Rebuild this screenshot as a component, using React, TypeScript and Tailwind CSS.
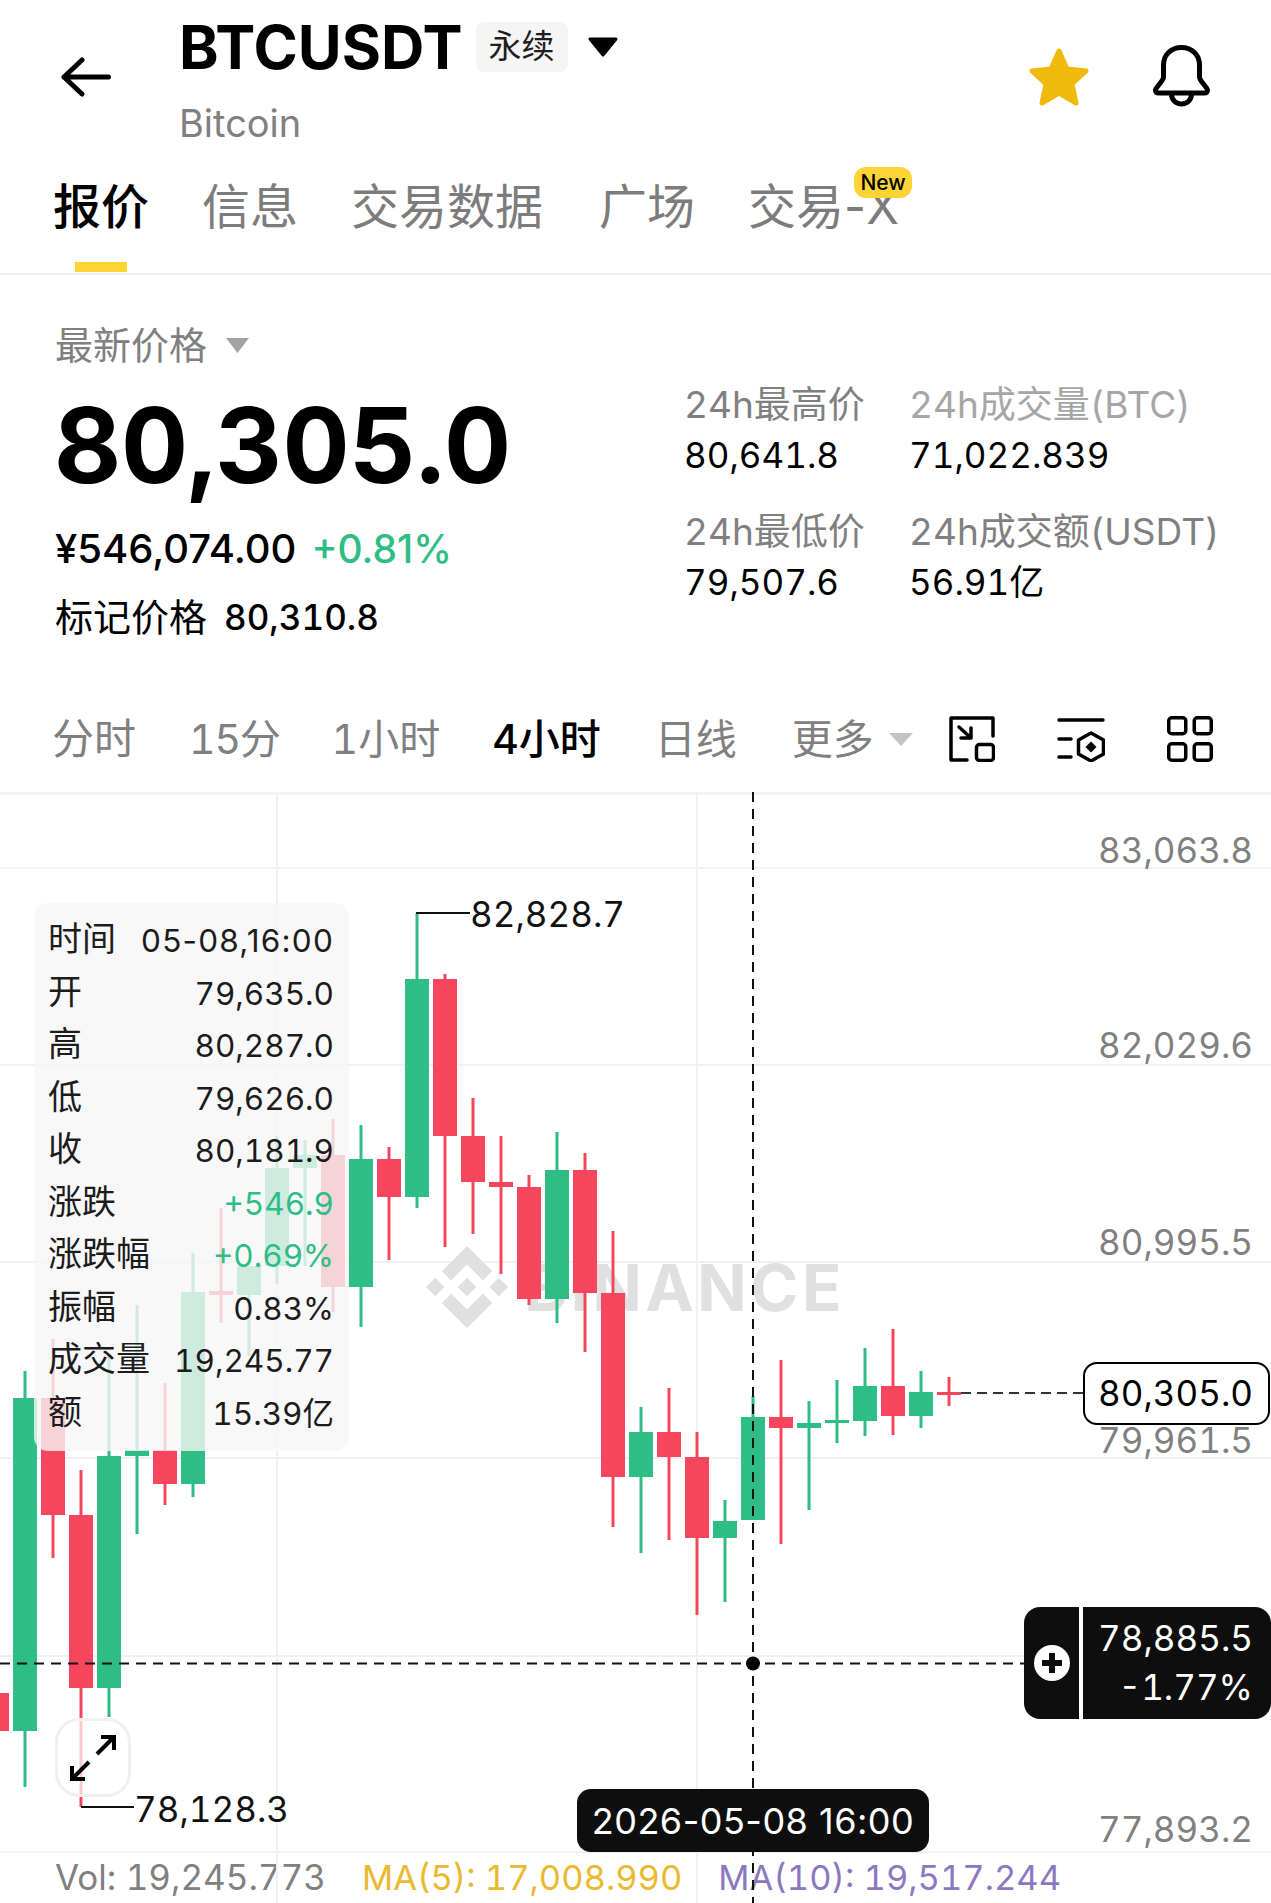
import React from "react";

type Candle = [x: number, top: number, bottom: number, high: number, low: number, up: boolean];

// page coordinates, the svg viewBox below starts at y=792
const candles: Candle[] = [
  [-3, 1693, 1731, 1693, 1731, false],
  [25, 1398, 1731, 1371, 1787, true],
  [53, 1398, 1515, 1339, 1558, false],
  [81, 1515, 1688, 1470, 1807, false],
  [109, 1456, 1688, 1354, 1717, true],
  [137, 1450, 1456, 1305, 1534, true],
  [165, 1450, 1484, 1383, 1505, false],
  [193, 1292, 1484, 1253, 1497, true],
  [221, 1291, 1295, 1208, 1323, false],
  [249, 1266, 1295, 1266, 1356, true],
  [277, 1168, 1266, 1136, 1284, true],
  [305, 1155, 1168, 1140, 1266, true],
  [333, 1155, 1287, 1119, 1312, false],
  [361, 1159, 1287, 1125, 1327, true],
  [389, 1159, 1197, 1147, 1260, false],
  [417, 979, 1197, 913, 1208, true],
  [445, 979, 1136, 974, 1247, false],
  [473, 1136, 1182, 1098, 1234, false],
  [501, 1182, 1187, 1136, 1274, false],
  [529, 1187, 1299, 1175, 1305, false],
  [557, 1170, 1299, 1132, 1323, true],
  [585, 1170, 1293, 1153, 1352, false],
  [613, 1293, 1477, 1231, 1527, false],
  [641, 1432, 1477, 1407, 1553, true],
  [669, 1432, 1457, 1388, 1540, false],
  [697, 1457, 1538, 1432, 1615, false],
  [725, 1521, 1538, 1500, 1602, true],
  [753, 1417, 1520, 1396, 1520, true],
  [781, 1417, 1428, 1360, 1544, false],
  [809, 1423, 1428, 1401, 1510, true],
  [837, 1420, 1423, 1380, 1443, true],
  [865, 1386, 1421, 1348, 1436, true],
  [893, 1386, 1416, 1329, 1435, false],
  [921, 1392, 1416, 1371, 1428, true],
  [949, 1392, 1395, 1377, 1406, false],
];

const axisLabels = [
  { text: "83,063.8", cls: "top-[36px]" },
  { text: "82,029.6", cls: "top-[231px]" },
  { text: "80,995.5", cls: "top-[428px]" },
  { text: "79,961.5", cls: "top-[626px]" },
  { text: "77,893.2", cls: "top-[1015px]" },
];

const tooltipRows = [
  { label: "时间", value: "05-08,16:00", cls: "proportional-nums tracking-[1.200px] text-[#1c1c1c]" },
  { label: "开", value: "79,635.0", cls: "text-[#1c1c1c]" },
  { label: "高", value: "80,287.0", cls: "text-[#1c1c1c]" },
  { label: "低", value: "79,626.0", cls: "text-[#1c1c1c]" },
  { label: "收", value: "80,181.9", cls: "text-[#1c1c1c]" },
  { label: "涨跌", value: "+546.9", cls: "text-[#2EBD85]" },
  { label: "涨跌幅", value: "+0.69%", cls: "text-[#2EBD85]" },
  { label: "振幅", value: "0.83%", cls: "text-[#1c1c1c]" },
  { label: "成交量", value: "19,245.77", cls: "text-[#1c1c1c]" },
  { label: "额", value: "15.39亿", cls: "text-[#1c1c1c]" },
];

function Header() {
  return (
    <div className="flex h-[160px]">
      <svg className="ml-[61px] mt-[57px] h-[40px] w-[50px]" viewBox="0 0 50 40" fill="none" stroke="#000" strokeWidth="5" strokeLinecap="round" strokeLinejoin="round">
        <path d="M47.5 20H3M21 3 3 20l18 17" />
      </svg>
      <div className="ml-[68px] pt-[22px]">
        <div className="flex h-[50px] items-center">
          <span className="text-[60px] font-bold leading-[50px] text-black">BTCUSDT</span>
          <span className="ml-[13px] flex h-[50px] w-[92px] items-center justify-center rounded-[8px] bg-[#f5f5f5] text-[33px] text-[#1e1e1e]">永续</span>
          <svg className="ml-[19px] h-[22px] w-[32px]" viewBox="0 0 32 22" fill="#000" stroke="#000" strokeWidth="3" strokeLinejoin="round">
            <path d="M3 3h26L16 19z" />
          </svg>
        </div>
        <div className="mt-[29px] text-[38px] leading-[44px] text-[#808080]">Bitcoin</div>
      </div>
      <div className="ml-auto mr-[59px] mt-[44px] flex items-start gap-[61px]">
        <svg className="mt-[3px] h-[60px] w-[62px]" viewBox="0 0 62 60" fill="#F0B90B" stroke="#F0B90B" strokeWidth="5" strokeLinejoin="round">
          <path d="M31 4l8 18 19 2-14 13 4 19-17-10-17 10 4-19L4 24l19-2z" />
        </svg>
        <svg className="h-[64px] w-[61px]" viewBox="0 0 61 64" fill="none" stroke="#000" strokeWidth="5" strokeLinejoin="round">
          <path d="M30.5 3.5C20 3.5 12.5 11 12.5 21v12c0 4-7.500 10-8 13 0 2 1.500 3 3.500 3h45c2 0 3.500-1 3.500-3-.5-3-8-9-8-13V21c0-10-7.500-17.500-18-17.500z" />
          <path d="M20.500 50c0 6 4.500 10 10 10s10-4 10-10" />
        </svg>
      </div>
    </div>
  );
}

function Tabs() {
  return (
    <div className="flex h-[113px] gap-[53px] pl-[53px] pt-[19px] text-[48px] leading-[56px] text-[#7c7c7c]">
      <div className="flex flex-col items-center">
        <span className="font-medium text-black">报价</span>
        <span className="mt-[27px] h-[10px] w-[52px] bg-[#FCD535]" />
      </div>
      <span>信息</span>
      <span>交易数据</span>
      <span className="ml-[3px]">广场</span>
      <span className="relative proportional-nums">
        交易-X
        <span className="absolute left-[106px] top-[-12px] flex h-[31px] w-[58px] items-center justify-center rounded-[12px] bg-[#FCD535] text-[21px] font-medium leading-none text-black">New</span>
      </span>
    </div>
  );
}

function Stats() {
  return (
    <div className="flex h-[411px]">
      <div className="w-[630px] pl-[55px] pt-[46px]">
        <div className="flex h-[48px] items-center text-[38px] leading-[48px] text-[#808080]">
          最新价格
          <svg className="ml-[18px] h-[17px] w-[25px]" viewBox="0 0 25 17" fill="#a3a3a3">
            <path d="M1 1h23L12.500 16z" />
          </svg>
        </div>
        <div className="-ml-[1px] mt-[24px] text-[104px] font-bold leading-[104px] tracking-[-0.3px] text-black">80,305.0</div>
        <div className="mt-[27px] flex h-[50px] items-center leading-[50px] proportional-nums">
          <span className="text-[40px] font-medium text-black">¥546,074.00</span>
          <span className="ml-[15px] text-[39px] font-medium text-[#2EBD85]">+0.81%</span>
        </div>
        <div className="mt-[18px] flex h-[50px] items-center leading-[50px] text-black">
          <span className="text-[38px]">标记价格</span>
          <span className="ml-[17px] text-[35px] font-medium">80,310.8</span>
        </div>
      </div>
      <div className="grid grid-cols-[225px_auto] content-start pl-[54px] pt-[108px] text-[35px] leading-[44px]">
        <div>
          <div className="text-[37px] text-[#808080]">24h最高价</div>
          <div className="mt-[6px] text-black">80,641.8</div>
        </div>
        <div>
          <div className="text-[37px] text-[#a6a6a6]">24h成交量(BTC)</div>
          <div className="mt-[6px] text-black">71,022.839</div>
        </div>
        <div className="mt-[33px]">
          <div className="text-[37px] text-[#808080]">24h最低价</div>
          <div className="mt-[6px] text-black">79,507.6</div>
        </div>
        <div className="mt-[33px]">
          <div className="text-[37px] text-[#808080]">24h成交额(USDT)</div>
          <div className="mt-[6px] text-black">56.91亿</div>
        </div>
      </div>
    </div>
  );
}

function Timeframes() {
  return (
    <div className="flex h-[106px] items-center pl-[52px] pr-[58px] text-[41px] leading-[50px] text-[#808080]">
      <div className="flex items-center gap-[52px]">
        <span className="text-[42px]">分时</span>
        <span className="ml-[1px] tracking-[-1.2px]">15分</span>
        <span>1小时</span>
        <span className="font-medium text-black">4小时</span>
        <span className="ml-[2px]">日线</span>
        <span className="ml-[3px] flex items-center">
          更多
          <svg className="ml-[14px] h-[15px] w-[26px]" viewBox="0 0 26 15" fill="#c4c4c4">
            <path d="M1 1h24L13 14z" />
          </svg>
        </span>
      </div>
      <div className="ml-auto flex items-center gap-[62px]">
        <svg className="h-[46px] w-[46px]" viewBox="0 0 46 46" fill="none" stroke="#000" strokeWidth="3.500" strokeLinecap="round" strokeLinejoin="round">
          <path d="M44 20V2H2v42h16" />
          <rect x="27.500" y="28.500" width="17" height="16" rx="3" />
          <path d="M10 11l12 11M12 22h10V12" />
        </svg>
        <svg className="h-[46px] w-[48px]" viewBox="0 0 48 46" fill="none" stroke="#000" strokeWidth="3.500" strokeLinecap="round" strokeLinejoin="round">
          <path d="M2 4h44M2 23h12M2 41h12" />
          <path d="M34 17l12.500 7v14L34 45l-12.500-7V24z" />
          <path d="M34 25.500l5.500 5.500-5.500 5.500-5.500-5.500z" fill="#000" stroke="none" />
        </svg>
        <svg className="h-[46px] w-[46px]" viewBox="0 0 46 46" fill="none" stroke="#000" strokeWidth="3.500" strokeLinejoin="round">
          <rect x="1.750" y="1.750" width="17" height="16" rx="3" />
          <rect x="27.250" y="1.750" width="17" height="16" rx="3" />
          <rect x="1.750" y="27.750" width="17" height="16.500" rx="3" />
          <rect x="27.250" y="27.750" width="17" height="16.500" rx="3" />
        </svg>
      </div>
    </div>
  );
}

function ChartDrawing() {
  const greenColor = "#2EBD85";
  const redColor = "#F6465D";
  return (
    <svg className="absolute left-0 top-0 z-10 h-[1111px] w-[1271px]" viewBox="0 792 1271 1111" fill="none">
      {/* grid */}
      {[868, 1065, 1262, 1458, 1656, 1852].map((y) => (
        <line key={y} x1="0" x2="1271" y1={y} y2={y} stroke="#f0f0f0" strokeWidth="2" />
      ))}
      {[277, 697].map((x) => (
        <line key={x} x1={x} x2={x} y1="792" y2="1903" stroke="#f0f0f0" strokeWidth="2" />
      ))}

      {/* watermark logo */}
      <g transform="translate(426 1246) scale(3.42)" fill="#e0e0e0">
        <path d="M16.624 13.9202l2.7175 2.7154-7.353 7.353-7.353-7.352 2.7175-2.7164 4.6355 4.6595 4.6356-4.6595zm4.6366-4.6366L24 12l-2.7154 2.7164L18.5682 12l2.6924-2.7164zm-9.272.001l2.7163 2.6914-2.7164 2.7174v-.001L9.2721 12l2.7164-2.7154zm-9.2722-.001L5.4088 12l-2.6914 2.6924L0 12l2.7164-2.7164zM11.9885.0115l7.353 7.329-2.7174 2.7154-4.6356-4.6356-4.6355 4.6595-2.7174-2.7154 7.353-7.353z" />
      </g>

      {/* candles */}
      {candles.map(([x, top, bottom, high, low, up]) => (
        <g key={x} fill={up ? greenColor : redColor}>
          <rect x={x - 1.5} y={high} width="3" height={low - high} />
          <rect x={x - 12} y={top} width="24" height={bottom - top} />
        </g>
      ))}

      {/* high / low leader lines */}
      <path d="M416 913h54M81 1807h53" stroke="#111" strokeWidth="2" />

      {/* last price line */}
      <line x1="961" x2="1083" y1="1393" y2="1393" stroke="#333" strokeWidth="2" strokeDasharray="10 6" />

      {/* crosshair */}
      <line x1="753" x2="753" y1="792" y2="1903" stroke="#111" strokeWidth="2" strokeDasharray="10 7" />
      <line x1="0" x2="1024" y1="1663.500" y2="1663.500" stroke="#111" strokeWidth="2" strokeDasharray="10 7" />
      <circle cx="753" cy="1663.500" r="7" fill="#000" />
    </svg>
  );
}

function Tooltip() {
  return (
    <div className="absolute left-[34px] top-[111px] z-20 h-[548px] w-[315px] rounded-[14px] bg-[#f6f6f6]/80 pl-[14px] pr-[15px] pt-[10px]">
      {tooltipRows.map((row) => (
        <div key={row.label} className="flex h-[52.500px] items-center justify-between leading-[52px]">
          <span className="text-[34px] text-[#1c1c1c]">{row.label}</span>
          <span className={`mt-[4px] text-[31.500px] ${row.cls}`}>{row.value}</span>
        </div>
      ))}
    </div>
  );
}

function Chart() {
  return (
    <div className="relative h-[1111px] w-full">
      <div className="absolute left-0 top-0 h-[3px] w-full bg-[#f3f3f3]" />

      {/* watermark wordmark sits under the candles */}
      <div className="absolute left-[524px] top-[461px] z-0 text-[65px] font-bold leading-[70px] tracking-[3.5px] text-[#e0e0e0]">BINANCE</div>

      <div className="h-[1060px]" />
      <div className="flex h-[51px] items-center gap-[36px] pl-[55px] text-[35px] leading-[51px]">
        <span className="text-[#808080]">Vol: 19,245.773</span>
        <span className="text-[34.500px] text-[#E9B92F]">MA(5): 17,008.990</span>
        <span className="text-[34.500px] text-[#8C78BE]">MA(10): 19,517.244</span>
      </div>

      <ChartDrawing />

      {axisLabels.map((label) => (
        <div key={label.text} className={`absolute right-[18px] z-[15] text-[35px] leading-[44px] text-[#808080] ${label.cls}`}>
          {label.text}
        </div>
      ))}

      <div className="absolute left-[470px] top-[100px] z-[15] text-[35px] leading-[44px] text-[#111]">82,828.7</div>
      <div className="absolute left-[134px] top-[995px] z-[15] text-[35px] leading-[44px] text-[#111]">78,128.3</div>

      <Tooltip />

      {/* expand button */}
      <div className="absolute left-[55px] top-[926px] z-20 flex h-[79px] w-[76px] items-center justify-center rounded-[24px] border-[3px] border-[#f0f0f0] bg-white/70">
        <svg className="h-[50px] w-[50px]" viewBox="0 0 50 50" fill="none" stroke="#000" strokeWidth="4" strokeLinejoin="miter">
          <path d="M29 21 46 4M33 4h13v13M21 29 4 46M4 33v13h13" />
        </svg>
      </div>

      {/* current price */}
      <div className="absolute right-[1px] top-[570px] z-20 flex h-[63px] w-[187px] items-center justify-end rounded-[14px] border-2 border-black bg-white pr-[15px] text-[35px] text-black">
        80,305.0
      </div>

      {/* crosshair price */}
      <div className="absolute left-[1024px] top-[815px] z-20 flex h-[112px] w-[247px] rounded-[16px] bg-[#0e0e0e] text-[35px] text-white">
        <div className="flex w-[55px] items-center justify-center">
          <svg className="h-[36px] w-[36px]" viewBox="0 0 36 36">
            <circle cx="18" cy="18" r="18" fill="#fff" />
            <path d="M18 8v20M8 18h20" stroke="#0e0e0e" strokeWidth="6" />
          </svg>
        </div>
        <div className="w-[3.500px] bg-white" />
        <div className="flex flex-1 flex-col items-end justify-center pr-[18px] leading-[49px]">
          <span>78,885.5</span>
          <span>-1.77%</span>
        </div>
      </div>

      {/* crosshair time */}
      <div className="absolute left-[577px] top-[997px] z-20 flex h-[63px] w-[352px] items-center justify-center rounded-[14px] bg-[#0e0e0e] text-[36px] tracking-[0.5px] text-white proportional-nums">
        2026-05-08 16:00
      </div>
    </div>
  );
}

export default function App() {
  return (
    <div className="relative h-[1903px] w-[1271px] overflow-hidden bg-white font-['Inter','Noto_Sans_CJK_SC',sans-serif] tabular-nums">
      <Header />
      <Tabs />
      <div className="h-[2px] bg-[#eeeeee]" />
      <Stats />
      <Timeframes />
      <Chart />
    </div>
  );
}
